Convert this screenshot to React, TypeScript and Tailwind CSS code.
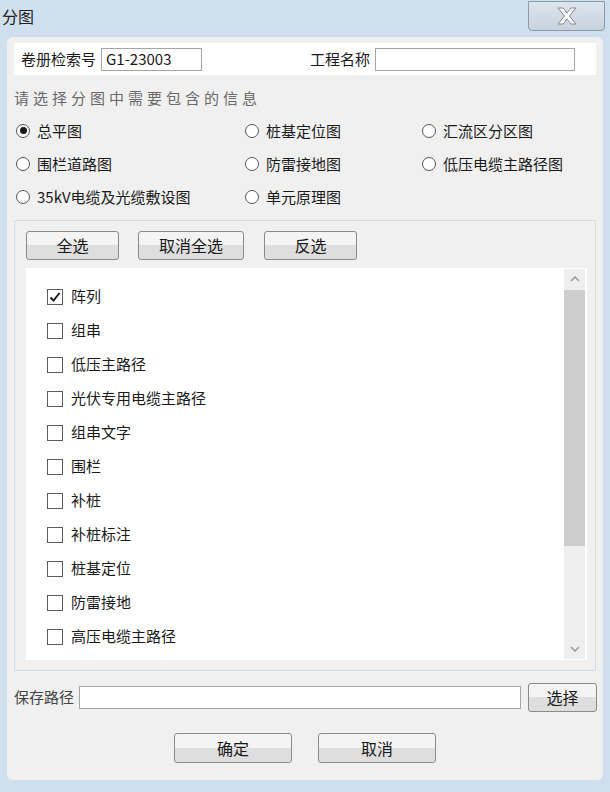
import { useState } from "react";

const font = { fontFamily: '"Noto Sans CJK SC", "Microsoft YaHei", sans-serif' };

const radios = [
  ["总平图", "桩基定位图", "汇流区分区图"],
  ["围栏道路图", "防雷接地图", "低压电缆主路径图"],
  ["35kV电缆及光缆敷设图", "单元原理图", ""],
];

const items = [
  "阵列",
  "组串",
  "低压主路径",
  "光伏专用电缆主路径",
  "组串文字",
  "围栏",
  "补桩",
  "补桩标注",
  "桩基定位",
  "防雷接地",
  "高压电缆主路径",
];

function WinButton({ label, className }: { label: string; className: string }) {
  return (
    <button
      className={
        "flex shrink-0 items-center justify-center rounded-[3px] border border-[#8a8a8a] bg-gradient-to-b from-[#f4f4f4] from-50% to-[#dedede] to-50% text-[16px] text-[#1a1a1a] " +
        className
      }
    >
      {label}
    </button>
  );
}

function Radio({ label, checked, onClick }: { label: string; checked: boolean; onClick: () => void }) {
  return (
    <div className="flex cursor-default items-center gap-[7px]" onClick={onClick}>
      <span className="flex h-[14px] w-[14px] items-center justify-center rounded-full border border-[#555] bg-white">
        {checked && <span className="h-[7px] w-[7px] rounded-full bg-[#1a1a1a]" />}
      </span>
      <span className="text-[15px] text-[#1a1a1a]">{label}</span>
    </div>
  );
}

export default function App() {
  const [sel, setSel] = useState("总平图");
  const [checked, setChecked] = useState<string[]>(["阵列"]);

  const toggle = (it: string) =>
    setChecked((c) => (c.includes(it) ? c.filter((x) => x !== it) : [...c, it]));

  return (
    <div className="flex h-[792px] w-[610px] flex-col bg-[#cfdfee]" style={font}>
      {/* title bar */}
      <div className="flex h-[37px] items-start justify-between">
        <span className="mt-[4px] pl-[2px] text-[16px] text-[#222]">分图</span>
        <div className="mr-[5px] mt-[1px] flex h-[30px] w-[77px] items-center justify-center rounded-b-[4px] border border-[#8c98a6] bg-gradient-to-b from-[#dde5ee] to-[#c8d2dd]">
          <svg width="22" height="18" viewBox="0 0 22 18">
            <path
              d="M2 1h5l4 5 4-5h5l-6.5 8 6.5 8h-5l-4-5-4 5H2l6.5-8z"
              fill="#fff"
              stroke="#7d8894"
              strokeWidth="1"
              strokeLinejoin="round"
            />
          </svg>
        </div>
      </div>

      {/* main panel */}
      <div className="mx-[7px] flex h-[743px] w-[596px] flex-col rounded-[6px] bg-[#f0f0f0] px-[7px] pt-[6px]">
        <div className="flex h-[32px] items-center whitespace-nowrap bg-white pl-[7px] text-[15px] text-[#1a1a1a]">
          <span className="w-[75px] shrink-0">卷册检索号</span>
          <div className="ml-[5px] flex h-[23px] w-[101px] shrink-0 items-center border border-[#a5a5a5] px-[4px]">G1-23003</div>
          <span className="ml-[108px] w-[60px] shrink-0">工程名称</span>
          <div className="ml-[5px] h-[23px] w-[200px] shrink-0 border border-[#a5a5a5]" />
        </div>

        <div className="mt-[12px] whitespace-nowrap text-[15px] tracking-[4px] text-[#6a6a6a]">请选择分图中需要包含的信息</div>

        <div className="mt-[10px] flex flex-col gap-[14px] pl-[2px]">
          {radios.map((row, i) => (
            <div key={i} className="grid h-[19px] grid-cols-[229px_177px_1fr] items-center whitespace-nowrap">
              {row.map((r) =>
                r ? <Radio key={r} label={r} checked={sel === r} onClick={() => setSel(r)} /> : <span key="e" />
              )}
            </div>
          ))}
        </div>

        {/* group */}
        <div className="mt-[15px] flex h-[451px] flex-col border border-[#d3dde6] px-[11px] pt-[10px]">
          <div className="flex h-[29px]">
            <WinButton label="全选" className="w-[93px]" />
            <WinButton label="取消全选" className="ml-[19px] w-[106px]" />
            <WinButton label="反选" className="ml-[20px] w-[93px]" />
          </div>
          <div className="mt-[8px] flex h-[392px] w-[561px] bg-white">
            <div className="flex flex-1 flex-col pl-[21px] pt-[12px]">
              {items.map((it) => (
                <div key={it} className="flex h-[34px] cursor-default items-center gap-[8px] whitespace-nowrap" onClick={() => toggle(it)}>
                  <span className="flex h-[16px] w-[16px] items-center justify-center border border-[#5c5c5c] bg-white">
                    {checked.includes(it) && (
                      <svg width="12" height="12" viewBox="0 0 12 12">
                        <path d="M1.5 6.5l3 3 6-7.5" fill="none" stroke="#1a1a1a" strokeWidth="2" />
                      </svg>
                    )}
                  </span>
                  <span className="text-[15px] text-[#1a1a1a]">{it}</span>
                </div>
              ))}
            </div>
            <div className="my-px mr-[2px] flex w-[21px] flex-col bg-[#efefef]">
              <div className="flex h-[21px] items-center justify-center">
                <svg width="10" height="6" viewBox="0 0 10 6">
                  <path d="M1 5l4-4 4 4" fill="none" stroke="#9a9a9a" strokeWidth="1.5" />
                </svg>
              </div>
              <div className="h-[256px] bg-[#cdcdcd]" />
              <div className="flex-1" />
              <div className="flex h-[20px] items-center justify-center">
                <svg width="10" height="6" viewBox="0 0 10 6">
                  <path d="M1 1l4 4 4-4" fill="none" stroke="#9a9a9a" strokeWidth="1.5" />
                </svg>
              </div>
            </div>
          </div>
        </div>

        <div className="mt-[12px] flex h-[29px] items-center whitespace-nowrap">
          <span className="w-[60px] shrink-0 text-[15px] text-[#444]">保存路径</span>
          <div className="ml-[5px] h-[23px] w-[442px] shrink-0 border border-[#a5a5a5] bg-white" />
          <WinButton label="选择" className="ml-[7px] h-[29px] w-[69px]" />
        </div>

        <div className="mt-[21px] flex justify-center gap-[26px]">
          <WinButton label="确定" className="h-[30px] w-[118px]" />
          <WinButton label="取消" className="h-[30px] w-[118px]" />
        </div>
      </div>
    </div>
  );
}
